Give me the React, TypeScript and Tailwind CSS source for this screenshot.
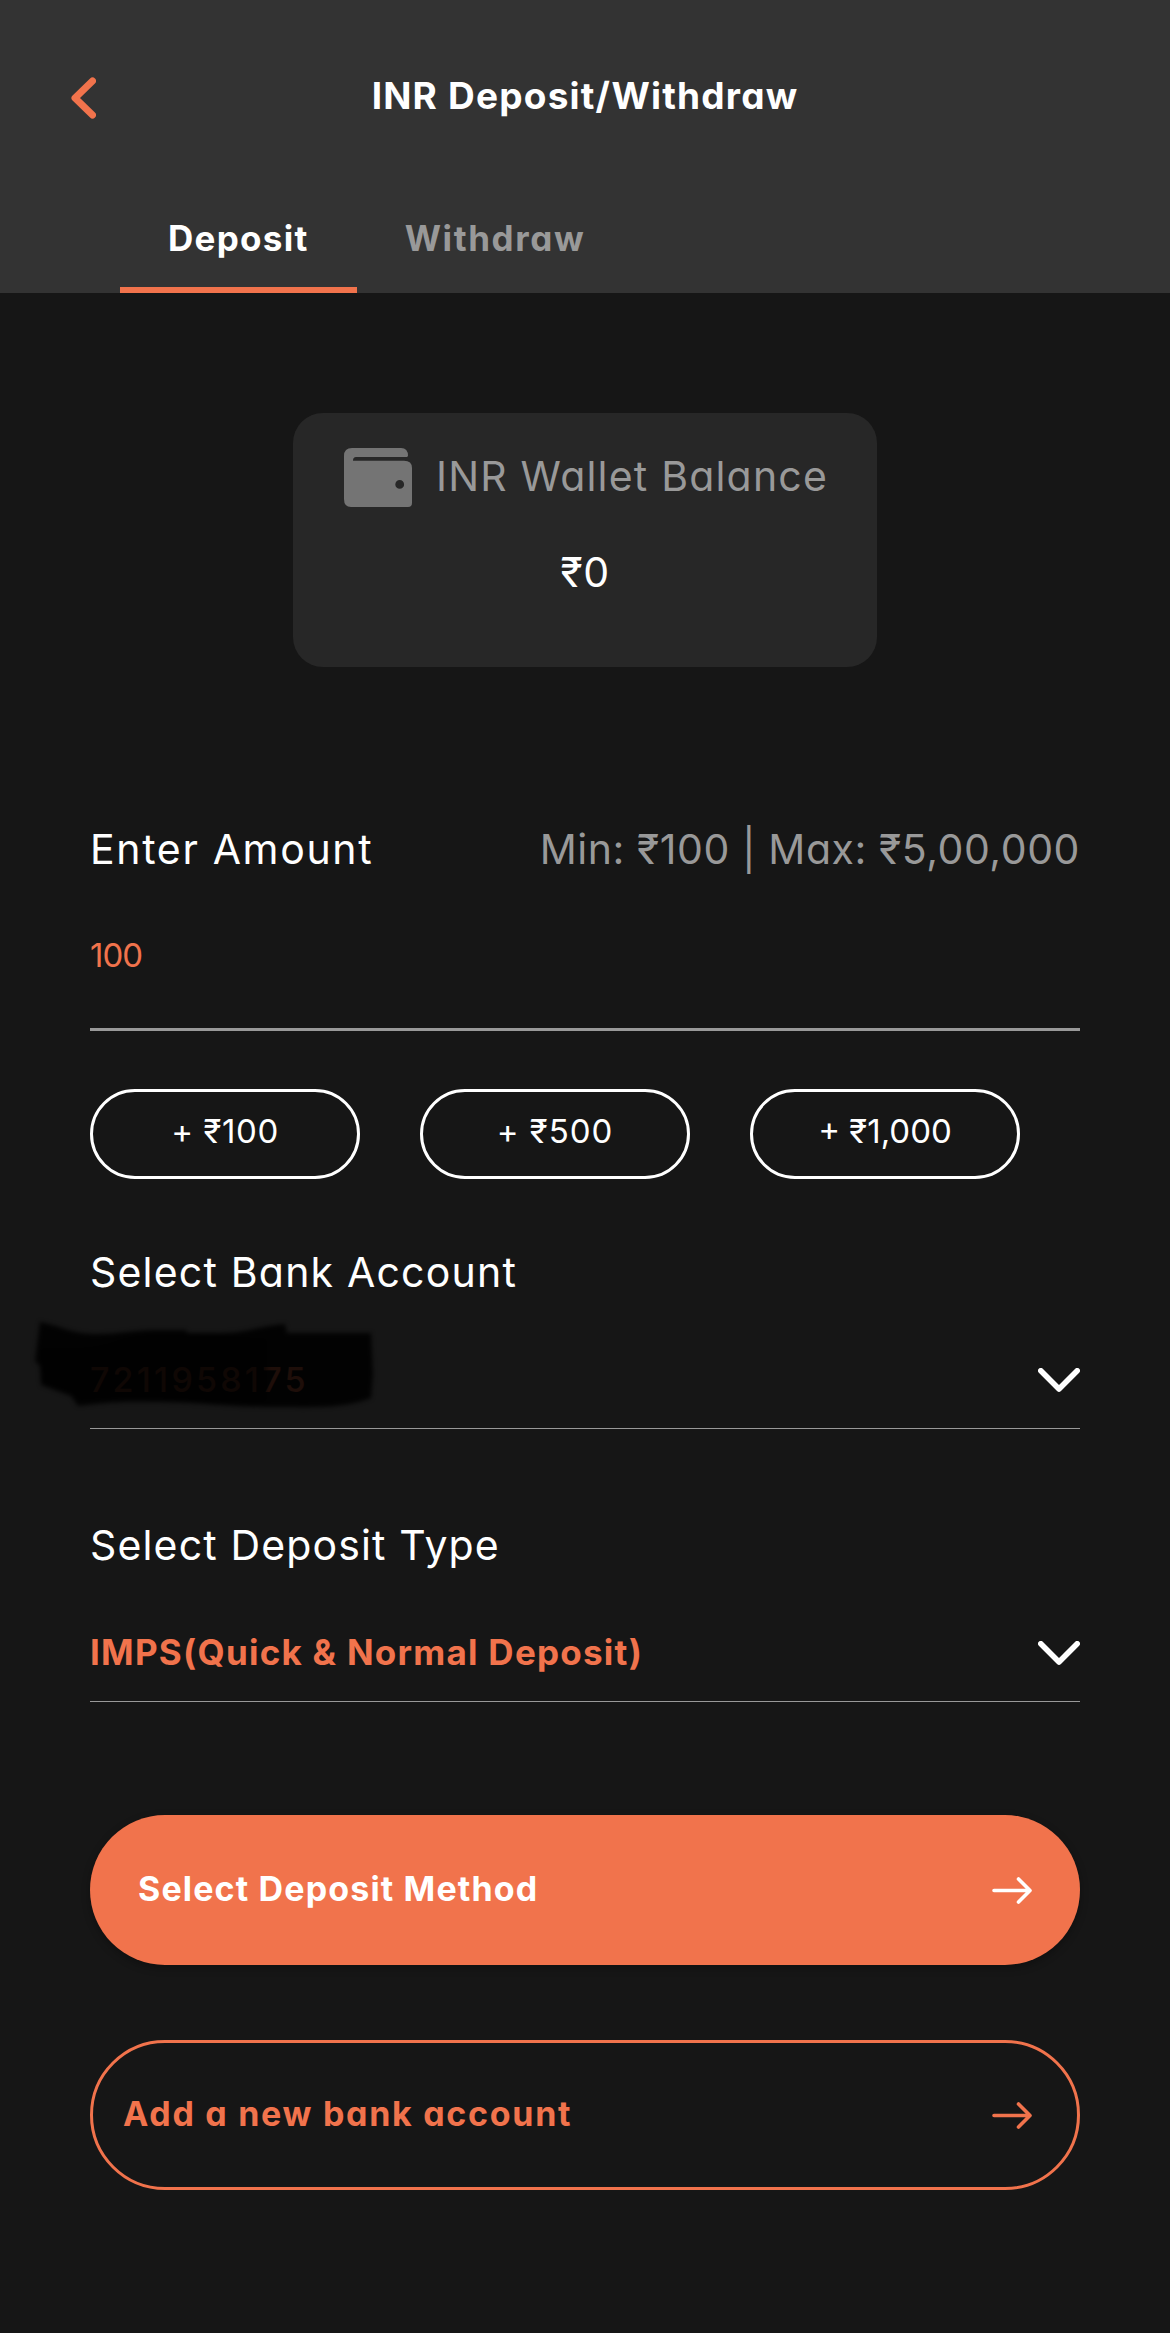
import { useState } from 'react'
import clsx from 'clsx'

const TABS = [
  { id: 'deposit', label: 'Deposit', spacing: 'tracking-[1.3px]' },
  { id: 'withdraw', label: 'Withdraw', spacing: 'tracking-[1.6px]' },
]

const QUICK_AMOUNTS = [
  { amount: '100', spacing: 'tracking-[0.6px]' },
  { amount: '500', spacing: 'tracking-[1px]' },
  { amount: '1,000', spacing: 'tracking-normal' },
]

function BackIcon() {
  return (
    <svg width="25" height="42" viewBox="0 0 25 42" fill="none">
      <path d="M21.5 4 L4 21 L21.5 38" stroke="#f1734c" strokeWidth="7" strokeLinecap="round" strokeLinejoin="round" />
    </svg>
  )
}

function WalletIcon() {
  return (
    <svg width="68" height="59" viewBox="0 0 68 59">
      <path
        fill="#747474"
        fillRule="evenodd"
        d="M8 0H57Q64 0 64 8L63 9H12Q9 9 9 12.7H60Q68 12.7 68 20V55Q68 59 64 59H7Q0 59 0 51V8Q0 0 8 0ZM55.7 32A4.4 4.4 0 1 0 55.7 40.8A4.4 4.4 0 1 0 55.7 32Z"
      />
    </svg>
  )
}

function ChevronDown() {
  return (
    <svg width="42" height="24" viewBox="0 0 42 24" fill="none">
      <path d="M2.8 2.8L21 21L39.2 2.8" stroke="#fff" strokeWidth="5.6" strokeLinecap="round" strokeLinejoin="round" />
    </svg>
  )
}

function ArrowRight() {
  return (
    <svg width="40" height="27" viewBox="0 0 40 27" fill="none">
      <path d="M2 13.5H38M26.5 2L38 13.5L26.5 25" stroke="currentColor" strokeWidth="3.6" strokeLinecap="round" strokeLinejoin="round" />
    </svg>
  )
}

// Marker strokes that hide the account number
function Scribble() {
  return (
    <svg className="absolute -top-[34px] -left-[57px] blur-[2px]" width="350" height="100" viewBox="0 0 350 100">
      <path
        fill="#000"
        fillOpacity="0.88"
        d="M7 8C25 11 38 20 62 20C90 20 98 16 125 16H152L155 19H190C215 19 225 12 252 10L254 19H338L340 60L338 84C310 95 280 93 240 93C190 93 170 88 120 88C80 87 65 90 45 92L38 82L8 71L7 52L2 47Z"
      />
      <path
        fill="#000"
        fillOpacity="0.5"
        d="M7 34C40 34 60 36 90 24C130 16 170 22 234 24V88C180 90 150 84 110 84C80 83 60 85 45 86L38 78L9 68Z"
      />
    </svg>
  )
}

export default function App() {
  const [tab, setTab] = useState('deposit')

  return (
    <div className="h-[2333px] w-[1170px] overflow-hidden bg-[#161616] font-['Inter','Noto_Sans',sans-serif] text-white [font-feature-settings:'cv11']">
      <header className="flex h-[293px] flex-col justify-between bg-[#333333]">
        <div className="grid grid-cols-[25px_1fr_25px] items-center px-[71px] pt-[66px]">
          <button className="pt-1">
            <BackIcon />
          </button>
          <h1 className="text-center text-[37px] leading-[60px] font-bold tracking-[1.2px] whitespace-nowrap">INR Deposit/Withdraw</h1>
        </div>
        <nav className="flex px-[120px]">
          {TABS.map(t => (
            <button
              key={t.id}
              onClick={() => setTab(t.id)}
              className={clsx(
                'h-[107px] border-b-[6px] px-12 text-[35px] leading-[104px] font-bold',
                t.spacing,
                tab === t.id ? 'border-[#f1734c] text-white' : 'border-transparent text-[#999999]'
              )}
            >
              {t.label}
            </button>
          ))}
        </nav>
      </header>

      <main className="px-[90px] pt-[120px]">
        <section className="mx-auto h-[254px] w-[584px] rounded-[30px] bg-[#272727] pt-[35px]">
          <div className="flex items-center gap-6 pl-[51px]">
            <WalletIcon />
            <span className="pb-[3px] text-[41px] leading-[56px] tracking-[1.2px] whitespace-nowrap text-[#999999]">
              INR Wallet Balance
            </span>
          </div>
          <p className="pt-[35px] text-center text-[41px] leading-[60px] tracking-[0.5px]">₹0</p>
        </section>

        <div className="mt-[152px] flex justify-between text-[41px] leading-[60px]">
          <label htmlFor="amount" className="tracking-[1.65px]">
            Enter Amount
          </label>
          <span className="tracking-[0.57px] text-[#999999]">Min: ₹100 | Max: ₹5,00,000</span>
        </div>
        <input
          id="amount"
          defaultValue="100"
          className="mt-[26px] block h-[126px] w-full border-b-[3px] border-[#999999] bg-transparent pb-[23px] text-[33px] tracking-[-1px] text-[#f1734c] outline-none"
        />

        <div className="mt-[58px] flex gap-[60px]">
          {QUICK_AMOUNTS.map(({ amount, spacing }) => (
            <button
              key={amount}
              className={clsx('h-[90px] w-[270px] rounded-full border-[3px] border-white pb-[4px] text-[33px]', spacing)}
            >
              + ₹{amount}
            </button>
          ))}
        </div>

        <p className="mt-[63px] text-[41px] leading-[60px] tracking-[1.2px]">Select Bank Account</p>
        <div className="mt-[34px] flex h-[93px] items-start justify-between border-b border-[#999999] pt-[12px]">
          <div className="relative pt-[12px]">
            <span className="block text-[34px] leading-[40px] font-medium tracking-[3.2px] text-[#f1734c]">7211958175</span>
            <Scribble />
          </div>
          <div className="pt-[20px]">
            <ChevronDown />
          </div>
        </div>

        <p className="mt-[86px] text-[41px] leading-[60px] tracking-[1.15px]">Select Deposit Type</p>
        <div className="mt-[34px] flex h-[93px] items-start justify-between border-b border-[#999999] pt-[23px]">
          <span className="text-[35px] leading-[40px] font-bold tracking-[1.25px] text-[#f1734c] [font-feature-settings:normal]">
            IMPS(Quick &amp; Normal Deposit)
          </span>
          <div className="pt-[9px]">
            <ChevronDown />
          </div>
        </div>

        <button className="mt-[113px] flex h-[150px] w-full items-center justify-between rounded-full bg-[#f1734c] px-12 shadow-[0_3px_8px_rgba(0,0,0,0.3)]">
          <span className="pb-[3px] text-[34px] font-bold tracking-[1.15px]">Select Deposit Method</span>
          <ArrowRight />
        </button>
        <button className="mt-[75px] flex h-[150px] w-full items-center justify-between rounded-full border-[3px] border-[#f1734c] pr-[45px] pl-[30px] text-[#f1734c]">
          <span className="pb-[3px] text-[34px] font-bold tracking-[1.7px]">Add a new bank account</span>
          <ArrowRight />
        </button>
      </main>
    </div>
  )
}
